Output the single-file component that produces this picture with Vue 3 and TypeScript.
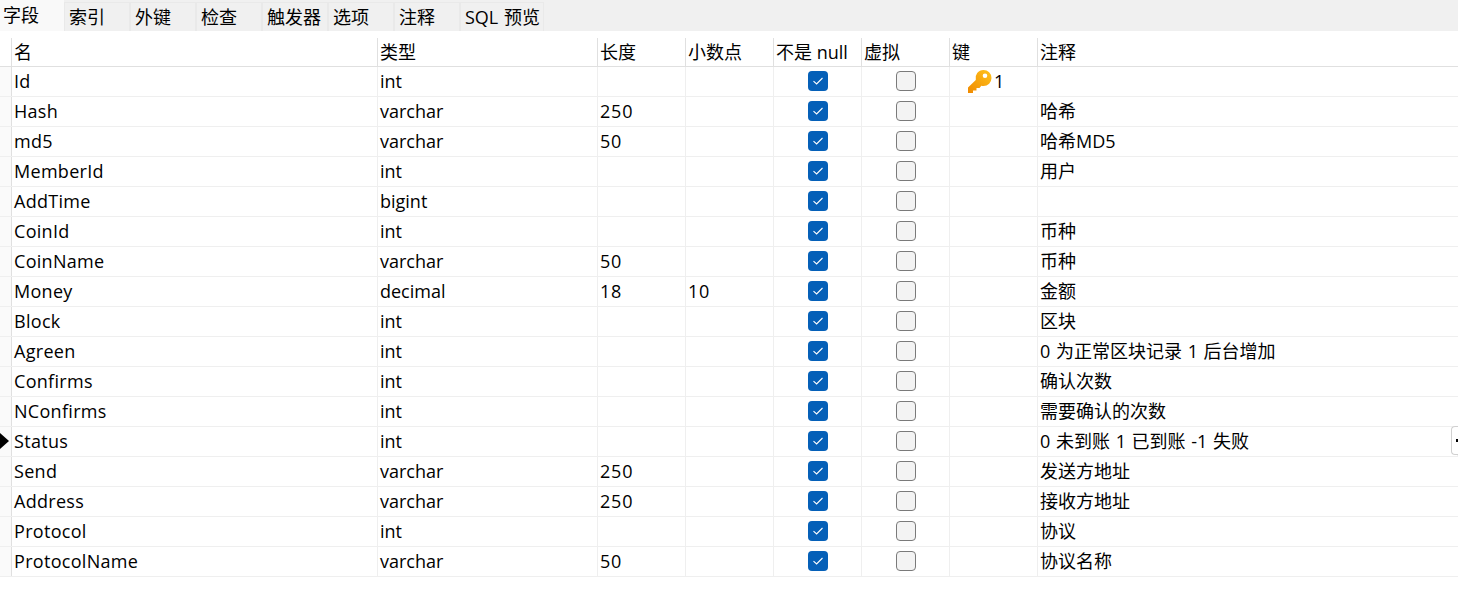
<script setup lang="ts">
interface Field {
  name: string;
  type: string;
  length?: string;
  decimals?: string;
  key?: string;
  comment?: string;
  current?: boolean;
}

const tabs = ['字段', '索引', '外键', '检查', '触发器', '选项', '注释', 'SQL 预览'];

const fields: Field[] = [
  { name: 'Id', type: 'int', key: '1' },
  { name: 'Hash', type: 'varchar', length: '250', comment: '哈希' },
  { name: 'md5', type: 'varchar', length: '50', comment: '哈希MD5' },
  { name: 'MemberId', type: 'int', comment: '用户' },
  { name: 'AddTime', type: 'bigint' },
  { name: 'CoinId', type: 'int', comment: '币种' },
  { name: 'CoinName', type: 'varchar', length: '50', comment: '币种' },
  { name: 'Money', type: 'decimal', length: '18', decimals: '10', comment: '金额' },
  { name: 'Block', type: 'int', comment: '区块' },
  { name: 'Agreen', type: 'int', comment: '0 为正常区块记录 1 后台增加' },
  { name: 'Confirms', type: 'int', comment: '确认次数' },
  { name: 'NConfirms', type: 'int', comment: '需要确认的次数' },
  { name: 'Status', type: 'int', comment: '0 未到账 1 已到账 -1 失败', current: true },
  { name: 'Send', type: 'varchar', length: '250', comment: '发送方地址' },
  { name: 'Address', type: 'varchar', length: '250', comment: '接收方地址' },
  { name: 'Protocol', type: 'int', comment: '协议' },
  { name: 'ProtocolName', type: 'varchar', length: '50', comment: '协议名称' }
];
</script>

<template>
  <div class="designer">
    <div class="tabs">
      <div v-for="(tab, i) in tabs" :key="tab" class="tab" :class="{ active: i === 0, wide: i === 7 }">{{ tab }}</div>
    </div>

    <div class="table">
      <div class="row head">
        <div class="gutter"></div>
        <div class="cell">名</div>
        <div class="cell">类型</div>
        <div class="cell">长度</div>
        <div class="cell">小数点</div>
        <div class="cell">不是 null</div>
        <div class="cell">虚拟</div>
        <div class="cell">键</div>
        <div class="cell">注释</div>
      </div>

      <div v-for="f in fields" :key="f.name" class="row">
        <div class="gutter">
          <span v-if="f.current" class="marker"></span>
        </div>
        <div class="cell name">{{ f.name }}</div>
        <div class="cell">{{ f.type }}</div>
        <div class="cell num">{{ f.length }}</div>
        <div class="cell num">{{ f.decimals }}</div>
        <div class="cell center">
          <span class="check on">
            <svg width="12" height="10" viewBox="0 0 12 10">
              <path d="M1.500 5.200 4.600 8 10.500 2" fill="none" stroke="#fff" stroke-width="1.100" />
            </svg>
          </span>
        </div>
        <div class="cell center"><span class="check"></span></div>
        <div class="cell keycell">
          <template v-if="f.key">
            <svg class="key" width="24" height="23" viewBox="0 0 24 23">
              <defs>
                <linearGradient id="gold" x1="0" y1="1" x2="1" y2="0">
                  <stop offset="0" stop-color="#f08a00" />
                  <stop offset="1" stop-color="#ffc21c" />
                </linearGradient>
              </defs>
              <path
                fill="url(#gold)"
                fill-rule="evenodd"
                d="M15.500 0a8 8 0 0 1 0 16c-.8 0-1.500-.1-2.200-.3L11.500 18H8.500v2.500H5V23H0v-5.500l7.800-7.500A8 8 0 0 1 15.500 0ZM17 3.500a2.300 2.300 0 1 0 0 4.600 2.300 2.300 0 0 0 0-4.600Z"
              />
            </svg>
            <span>{{ f.key }}</span>
          </template>
        </div>
        <div class="cell comment">{{ f.comment }}</div>
        <div v-if="f.current" class="row-handle"><span></span></div>
      </div>
    </div>
  </div>
</template>

<style>
html,
body {
  background: #fff;
  overflow: hidden;
}
</style>

<style scoped>
.designer {
  width: 1458px;
  height: 600px;
  overflow: hidden;
  background: #fff;
  color: #000;
  font-family: "Open Sans", "Noto Sans CJK SC", sans-serif;
  font-size: 18px;
}

.tabs {
  display: flex;
  height: 31px;
  background: #f0f0f0;
  padding-top: 2px;
  box-sizing: border-box;
}

.tab {
  width: 66px;
  box-sizing: border-box;
  padding: 0 0 0 4px;
  line-height: 29px;
  border: 1px solid #e9e9e9;
  border-bottom: 0;
  white-space: nowrap;
}

.tab.wide {
  width: 84px;
  word-spacing: 1px;
}

.tab.active {
  width: 64px;
  margin-top: -2px;
  padding-left: 3px;
  line-height: 31px;
  background: #f9f9f9;
  border: 0;
}

.table {
  padding-top: 7px;
}

.row {
  position: relative;
  display: grid;
  grid-template-columns: 12px 366px 220px 88px 88px 88px 88px 88px 1fr;
  height: 30px;
  border-bottom: 1px solid #efefef;
  box-sizing: border-box;
}

.row.head {
  height: 29px;
  border-bottom: 1px solid #e0e0e0;
}

.gutter {
  position: relative;
  border-right: 1px solid #e0e0e0;
  box-sizing: border-box;
  background: #fafafa;
}

.head .gutter {
  background: #fff;
}

.marker {
  position: absolute;
  left: 0;
  top: 6px;
  border-left: 9px solid #000;
  border-top: 8px solid transparent;
  border-bottom: 8px solid transparent;
}

.cell {
  box-sizing: border-box;
  padding-left: 2px;
  line-height: 29px;
  border-right: 1px solid #efefef;
  white-space: nowrap;
  overflow: hidden;
}

.head .cell {
  line-height: 28px;
  border-right-color: #e0e0e0;
}

.cell:last-of-type {
  border-right: 0;
}

.name {
  letter-spacing: 0.3px;
}

.num {
  letter-spacing: 0.8px;
}

.comment {
  word-spacing: 1px;
}

.center {
  display: flex;
  align-items: center;
  justify-content: center;
  padding: 0 0 1px;
}

.check {
  display: flex;
  align-items: center;
  justify-content: center;
  width: 20px;
  height: 20px;
  box-sizing: border-box;
  border-radius: 4px;
  border: 1px solid #7a7a7a;
  background: #f3f3f3;
}

.check.on {
  border: 0;
  background: #0560b8;
}

.keycell {
  display: flex;
  align-items: center;
  gap: 2px;
  padding-left: 18px;
}

.key {
  flex-shrink: 0;
}

.row-handle {
  position: absolute;
  right: 0;
  top: -1px;
  width: 7px;
  height: 29px;
  box-sizing: border-box;
  border: 1px solid #d0d0d0;
  border-right: 0;
  border-radius: 4px 0 0 4px;
  background: #fff;
}

.row-handle span {
  position: absolute;
  left: 4px;
  top: 12px;
  width: 2px;
  height: 3px;
  background: #000;
}
</style>
